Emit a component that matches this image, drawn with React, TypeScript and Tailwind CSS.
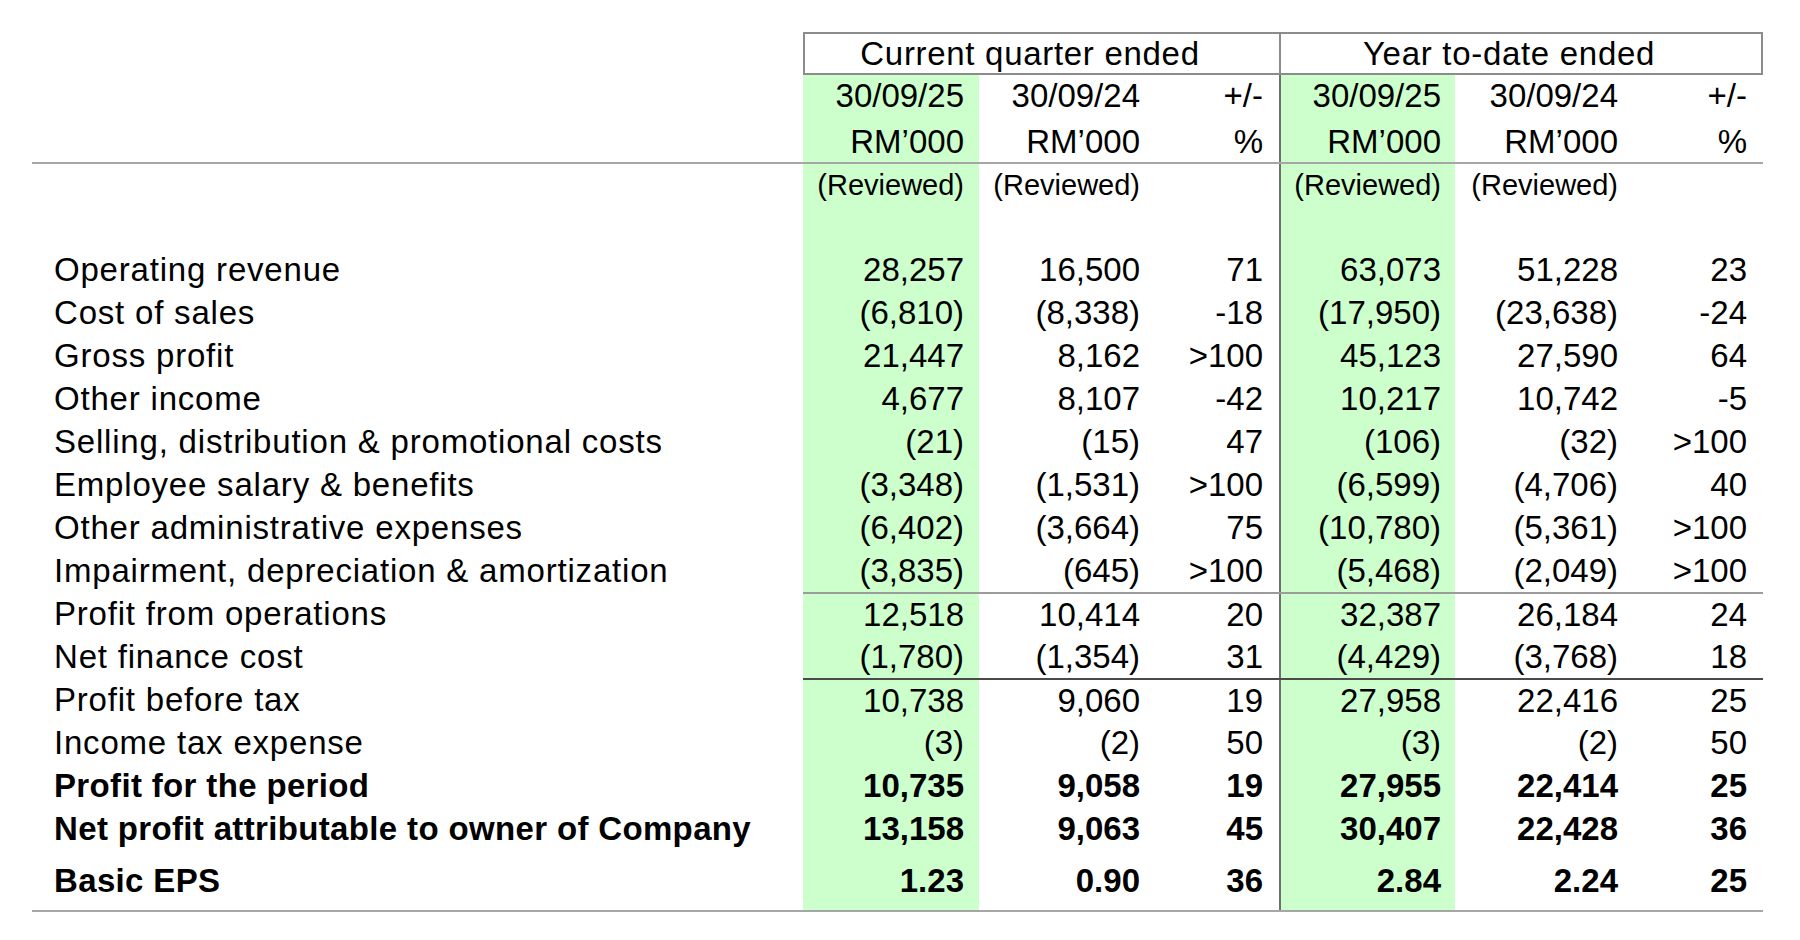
type Line = 'none' | 'light' | 'dark'

type RowData = {
  label: string
  values: string[]
  bold?: boolean
  line?: Line
  tall?: boolean
}

const rows: RowData[] = [
  { label: 'Operating revenue', values: ['28,257', '16,500', '71', '63,073', '51,228', '23'] },
  { label: 'Cost of sales', values: ['(6,810)', '(8,338)', '-18', '(17,950)', '(23,638)', '-24'] },
  { label: 'Gross profit', values: ['21,447', '8,162', '>100', '45,123', '27,590', '64'] },
  { label: 'Other income', values: ['4,677', '8,107', '-42', '10,217', '10,742', '-5'] },
  { label: 'Selling, distribution & promotional costs', values: ['(21)', '(15)', '47', '(106)', '(32)', '>100'] },
  { label: 'Employee salary & benefits', values: ['(3,348)', '(1,531)', '>100', '(6,599)', '(4,706)', '40'] },
  { label: 'Other administrative expenses', values: ['(6,402)', '(3,664)', '75', '(10,780)', '(5,361)', '>100'] },
  { label: 'Impairment, depreciation & amortization', values: ['(3,835)', '(645)', '>100', '(5,468)', '(2,049)', '>100'] },
  { label: 'Profit from operations', values: ['12,518', '10,414', '20', '32,387', '26,184', '24'], line: 'light' },
  { label: 'Net finance cost', values: ['(1,780)', '(1,354)', '31', '(4,429)', '(3,768)', '18'] },
  { label: 'Profit before tax', values: ['10,738', '9,060', '19', '27,958', '22,416', '25'], line: 'dark' },
  { label: 'Income tax expense', values: ['(3)', '(2)', '50', '(3)', '(2)', '50'] },
  { label: 'Profit for the period', values: ['10,735', '9,058', '19', '27,955', '22,414', '25'], bold: true },
  { label: 'Net profit attributable to owner of Company', values: ['13,158', '9,063', '45', '30,407', '22,428', '36'], bold: true },
  { label: 'Basic EPS', values: ['1.23', '0.90', '36', '2.84', '2.24', '25'], bold: true, tall: true },
]

// fixed column geometry, matches the report layout
const cols = [
  'w-[176px] pr-[15px] bg-[#ccffcc]',
  'w-[176px] pr-[15px]',
  'w-[124px] pr-[16px]',
  'w-[176px] pr-[14px] bg-[#ccffcc] border-l-2 border-l-[#6f6f6f]',
  'w-[176px] pr-[13px]',
  'w-[132px] pr-[16px]',
]

const Cells = ({ values, bold, extra = '' }: { values: string[]; bold?: boolean; extra?: string }) => (
  <>
    {values.map((v, i) => (
      <div key={i} className={`${cols[i]} ${extra} h-full flex items-center justify-end ${bold ? 'font-bold' : ''}`}>
        {v}
      </div>
    ))}
  </>
)

const DataRow = ({ row }: { row: RowData }) => {
  const lineCls =
    row.line === 'light'
      ? 'border-t-2 border-t-[#9c9c9c]'
      : row.line === 'dark'
        ? 'border-t-2 border-t-[#4a4a4a]'
        : ''
  return (
    <div className={`flex ${row.tall ? 'h-[62px] border-b-2 border-b-[#a6a6a6]' : 'h-[43px]'}`}>
      <div
        className={`w-[771px] pl-[22px] flex items-center ${row.bold ? 'font-bold tracking-[0.35px]' : 'tracking-[0.8px]'}`}
      >
        {row.label}
      </div>
      <div className={`flex h-full ${lineCls}`}>
        <Cells values={row.values} bold={row.bold} />
      </div>
    </div>
  )
}

export default function App() {
  return (
    <div className="w-[1800px] h-[940px] bg-white text-black font-['Liberation_Sans',Arial,sans-serif] text-[33px] leading-none">
      <div className="ml-[32px] w-[1731px] pt-[32px]">
        {/* period header box */}
        <div className="flex h-[43px]">
          <div className="w-[771px]" />
          <div className="flex w-[960px] border-2 border-[#8c8c8c] tracking-[0.7px]">
            <div className="w-[474px] pr-[24px] flex items-center justify-center">Current quarter ended</div>
            <div className="flex-1 pr-[24px] border-l-2 border-l-[#8c8c8c] flex items-center justify-center">
              Year to-date ended
            </div>
          </div>
        </div>

        <div className="flex h-[40px]">
          <div className="w-[771px]" />
          <Cells values={['30/09/25', '30/09/24', '+/-', '30/09/25', '30/09/24', '+/-']} />
        </div>
        <div className="flex h-[47px]">
          <div className="w-[771px]" />
          <Cells values={['RM’000', 'RM’000', '%', 'RM’000', 'RM’000', '%']} extra="pt-[6px]" />
        </div>

        <div className="flex h-[44px] border-t-2 border-t-[#a6a6a6] text-[29px]">
          <div className="w-[771px]" />
          <Cells values={['(Reviewed)', '(Reviewed)', '', '(Reviewed)', '(Reviewed)', '']} />
        </div>
        <div className="flex h-[42px]">
          <div className="w-[771px]" />
          <Cells values={['', '', '', '', '', '']} />
        </div>

        {rows.map((r) => (
          <DataRow key={r.label} row={r} />
        ))}
      </div>
    </div>
  )
}
